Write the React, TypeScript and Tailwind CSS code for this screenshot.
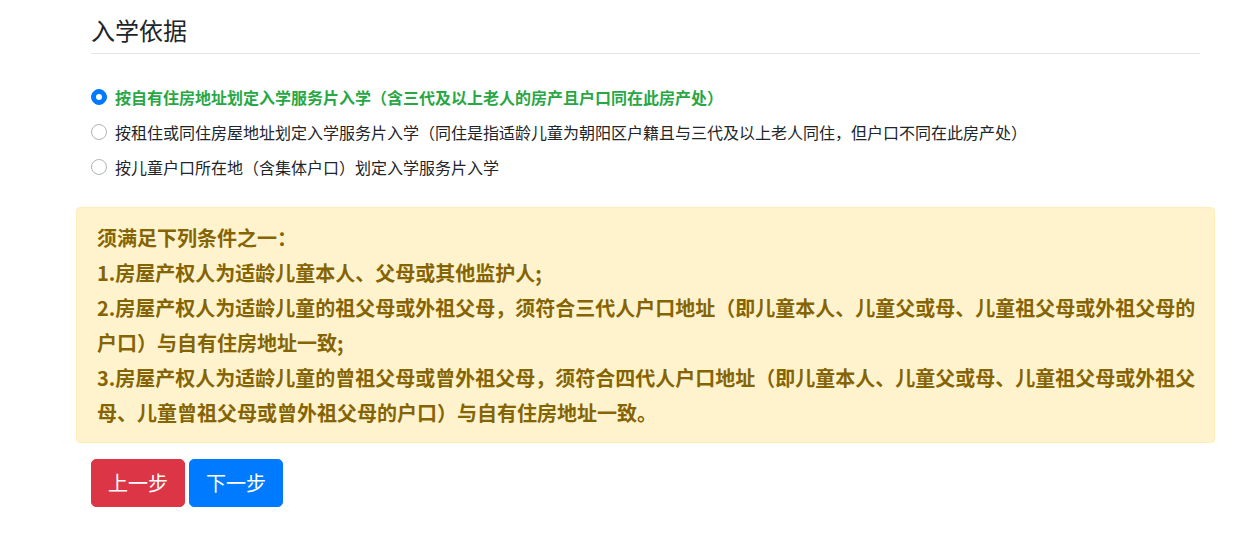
import React, { useState } from 'react';

const options = [
  '按自有住房地址划定入学服务片入学（含三代及以上老人的房产且户口同在此房产处）',
  '按租住或同住房屋地址划定入学服务片入学（同住是指适龄儿童为朝阳区户籍且与三代及以上老人同住，但户口不同在此房产处）',
  '按儿童户口所在地（含集体户口）划定入学服务片入学',
];

const conditions = [
  '须满足下列条件之一：',
  '1.房屋产权人为适龄儿童本人、父母或其他监护人;',
  '2.房屋产权人为适龄儿童的祖父母或外祖父母，须符合三代人户口地址（即儿童本人、儿童父或母、儿童祖父母或外祖父母的户口）与自有住房地址一致;',
  '3.房屋产权人为适龄儿童的曾祖父母或曾外祖父母，须符合四代人户口地址（即儿童本人、儿童父或母、儿童祖父母或外祖父母、儿童曾祖父母或曾外祖父母的户口）与自有住房地址一致。',
];

const App: React.FC = () => {
  const [selected, setSelected] = useState(0);

  return (
    <div className="min-h-screen bg-white text-[#212529] font-['Noto_Sans_CJK_SC',sans-serif]">
      <div className="ml-[76px] w-[1139px]">
        {/* Title */}
        <div className="px-[15px]">
          <div className="pt-[15px] pb-[9px] border-b border-[#e6e6e6]">
            <h4 className="text-[24px] leading-[29px] font-normal">入学依据</h4>
          </div>
        </div>

        {/* Radio options */}
        <div className="px-[15px] pt-[25px] pb-[23px]">
          {options.map((label, i) => {
            const checked = selected === i;
            return (
              <label
                key={i}
                className={`flex items-center h-[35px] text-[16px] cursor-pointer ${
                  checked ? 'text-[#28a745] font-bold' : 'text-[#212529]'
                }`}
                onClick={() => setSelected(i)}
              >
                <span
                  className={`w-4 h-4 rounded-full border flex items-center justify-center shrink-0 mr-2 ${
                    checked ? 'bg-[#007bff] border-[#007bff]' : 'bg-white border-[#adb5bd]'
                  }`}
                >
                  {checked && <span className="w-[6px] h-[6px] rounded-full bg-white" />}
                </span>
                <span>{label}</span>
              </label>
            );
          })}
        </div>

        {/* Conditions */}
        <div className="bg-[#fff3cd] border border-[#ffeeba] rounded text-[#856404] font-bold text-[20px] leading-[35px] pt-3 pb-3 pl-5 pr-[18px]">
          {conditions.map((c, i) => (
            <p key={i}>{c}</p>
          ))}
        </div>

        {/* Buttons */}
        <div className="px-[15px] pt-4 flex gap-1">
          <button className="bg-[#dc3545] text-white text-[20px] leading-[30px] px-4 py-2 rounded-[5px] border border-[#dc3545]">
            上一步
          </button>
          <button className="bg-[#007bff] text-white text-[20px] leading-[30px] px-4 py-2 rounded-[5px] border border-[#007bff]">
            下一步
          </button>
        </div>
      </div>
    </div>
  );
};

export default App;
